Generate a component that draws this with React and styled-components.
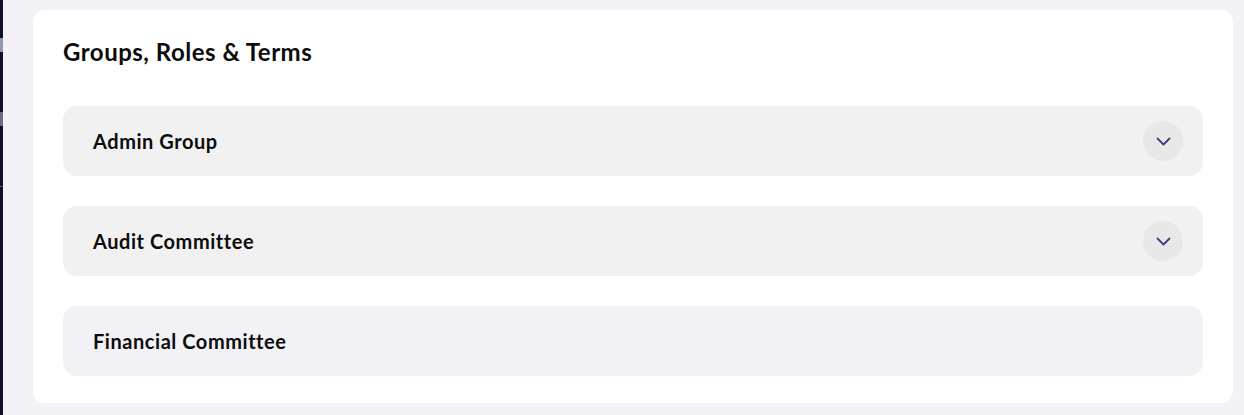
import React from 'react';
import styled, { createGlobalStyle } from 'styled-components';

const GlobalStyle = createGlobalStyle`
	html, body {
		margin: 0;
		padding: 0;
		background-color: #f3f2f7;
		font-family: Lato, 'Noto Sans', sans-serif;
	}
`;

const Page = styled.div`
	display: flex;
	height: 415px;
	overflow: hidden;
`;

const Sidebar = styled.div`
	width: 3px;
	flex-shrink: 0;
	background-color: #150f26;
	overflow: hidden;
	display: flex;
	flex-direction: column;
	padding-top: 38px;
	box-sizing: border-box;
`;

const SideItem = styled.div`
	width: 3px;
	height: ${(props) => props.h}px;
	margin-bottom: ${(props) => props.gap}px;
	background-color: ${(props) => props.color};
`;

const Main = styled.main`
	flex-grow: 1;
	padding: 10px 11px 12px 30px;
	box-sizing: border-box;
`;

const Card = styled.section`
	background-color: #ffffff;
	border-radius: 12px;
	padding: 26px 30px 27px;
	box-sizing: border-box;
	height: 100%;
`;

const Title = styled.h2`
	margin: 0 0 38px;
	font-size: 24px;
	font-weight: 700;
	line-height: 32px;
	letter-spacing: 0.5px;
	color: #0c0c0c;
`;

const List = styled.div`
	display: flex;
	flex-direction: column;
	gap: 30px;
`;

const Row = styled.div`
	height: 70px;
	border-radius: 14px;
	background-color: ${(props) => (props.active ? '#f2f1f6' : '#f1f1f1')};
	display: flex;
	align-items: center;
	justify-content: space-between;
	padding: 0 20px 0 30px;
	box-sizing: border-box;
`;

const RowTitle = styled.div`
	font-size: 20px;
	font-weight: 700;
	letter-spacing: 0.55px;
	color: #0c0c0c;
`;

const Toggle = styled.button`
	width: 40px;
	height: 40px;
	border: none;
	border-radius: 50%;
	background-color: #e8e8e8;
	display: flex;
	align-items: center;
	justify-content: center;
	padding: 0;
	cursor: pointer;
`;

const Chevron = () => (
	<svg width="15" height="9" viewBox="0 0 15 9" fill="none">
		<path
			d="M1.5 1.5l6 6 6-6"
			stroke="#463a80"
			strokeWidth="1.8"
			strokeLinecap="round"
			strokeLinejoin="round"
		/>
	</svg>
);

const groups = [
	{ name: 'Admin Group', expandable: true },
	{ name: 'Audit Committee', expandable: true },
	{ name: 'Financial Committee', expandable: false },
];

const App = () => {
	return (
		<>
			<GlobalStyle />
			<Page>
				<Sidebar>
					<SideItem h={14} gap={60} color="#8c9bb0" />
					<SideItem h={14} gap={60} color="#6f6a80" />
					<SideItem h={1} gap={0} color="#5d5870" />
				</Sidebar>
				<Main>
					<Card>
						<Title>Groups, Roles &amp; Terms</Title>
						<List>
							{groups.map((group) => (
								<Row key={group.name} active={!group.expandable}>
									<RowTitle>{group.name}</RowTitle>
									{group.expandable && (
										<Toggle aria-label="Expand">
											<Chevron />
										</Toggle>
									)}
								</Row>
							))}
						</List>
					</Card>
				</Main>
			</Page>
		</>
	);
};

export default App;
